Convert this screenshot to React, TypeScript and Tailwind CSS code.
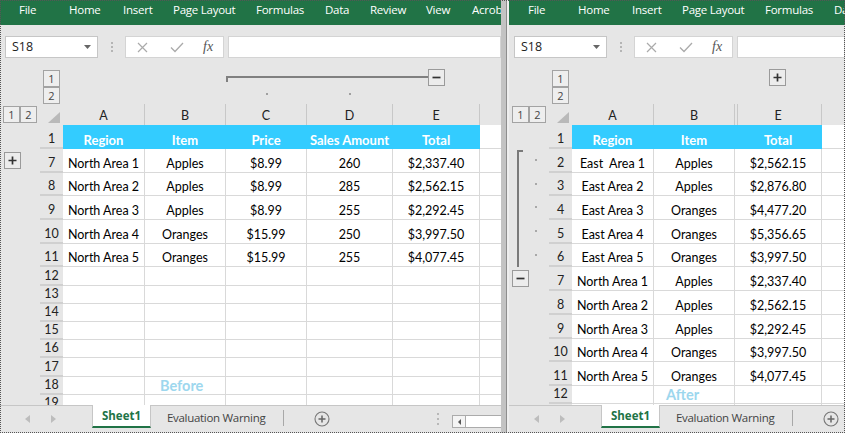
import React from 'react';

type Outline = 'start' | 'mid' | 'minus' | 'plus';
type Col = { key: string; w: string; outline?: Outline; hiddenBefore?: boolean };
type Side = 'plus' | 'minus' | 'top' | 'line';
type Row = {
  n: number;
  h: string;
  cells?: string[];
  head?: boolean;
  side?: Side;
  note?: { text: string; col: number; pad: string };
};

const UI = "font-['Open_Sans','Noto_Sans',sans-serif]";
const CELL = "font-['Lato','Carlito',sans-serif]";
const TALL = 'h-[23.7px]';
const SHORT = 'h-[18.2px]';

const RIBBON: [string, string][] = [
  ['File', 'w-[50px]'],
  ['Home', 'w-[54px]'],
  ['Insert', 'w-[50px]'],
  ['Page Layout', 'w-[83px]'],
  ['Formulas', 'w-[69px]'],
  ['Data', 'w-[45px]'],
  ['Review', 'w-[56px]'],
  ['View', 'w-[46px]'],
  ['Acrobat', 'w-[60px]'],
];

const LEFT_COLS: Col[] = [
  { key: 'A', w: 'w-[82px]' },
  { key: 'B', w: 'w-[81px]' },
  { key: 'C', w: 'w-[81px]', outline: 'start' },
  { key: 'D', w: 'w-[86px]', outline: 'mid' },
  { key: 'E', w: 'w-[87px]', outline: 'minus' },
];

const RIGHT_COLS: Col[] = [
  { key: 'A', w: 'w-[82px]' },
  { key: 'B', w: 'w-[81px]' },
  { key: 'E', w: 'w-[87px]', outline: 'plus', hiddenBefore: true },
];

const LEFT_ROWS: Row[] = [
  { n: 1, h: 'h-[24px]', head: true, cells: ['Region', 'Item', 'Price', 'Sales Amount', 'Total'] },
  { n: 7, h: TALL, side: 'plus', cells: ['North Area 1', 'Apples', '$8.99', '260', '$2,337.40'] },
  { n: 8, h: TALL, cells: ['North Area 2', 'Apples', '$8.99', '285', '$2,562.15'] },
  { n: 9, h: TALL, cells: ['North Area 3', 'Apples', '$8.99', '255', '$2,292.45'] },
  { n: 10, h: TALL, cells: ['North Area 4', 'Oranges', '$15.99', '250', '$3,997.50'] },
  { n: 11, h: TALL, cells: ['North Area 5', 'Oranges', '$15.99', '255', '$4,077.45'] },
  { n: 12, h: SHORT },
  { n: 13, h: SHORT },
  { n: 14, h: SHORT },
  { n: 15, h: SHORT },
  { n: 16, h: SHORT },
  { n: 17, h: SHORT },
  { n: 18, h: SHORT, note: { text: 'Before', col: 1, pad: 'pl-[15px]' } },
  { n: 19, h: SHORT },
];

const RIGHT_ROWS: Row[] = [
  { n: 1, h: 'h-[24px]', head: true, cells: ['Region', 'Item', 'Total'] },
  { n: 2, h: TALL, side: 'top', cells: ['East  Area 1', 'Apples', '$2,562.15'] },
  { n: 3, h: TALL, side: 'line', cells: ['East Area 2', 'Apples', '$2,876.80'] },
  { n: 4, h: TALL, side: 'line', cells: ['East Area 3', 'Oranges', '$4,477.20'] },
  { n: 5, h: TALL, side: 'line', cells: ['East Area 4', 'Oranges', '$5,356.65'] },
  { n: 6, h: TALL, side: 'line', cells: ['East Area 5', 'Oranges', '$3,997.50'] },
  { n: 7, h: TALL, side: 'minus', cells: ['North Area 1', 'Apples', '$2,337.40'] },
  { n: 8, h: TALL, cells: ['North Area 2', 'Apples', '$2,562.15'] },
  { n: 9, h: TALL, cells: ['North Area 3', 'Apples', '$2,292.45'] },
  { n: 10, h: TALL, cells: ['North Area 4', 'Oranges', '$3,997.50'] },
  { n: 11, h: TALL, cells: ['North Area 5', 'Oranges', '$4,077.45'] },
  { n: 12, h: SHORT, note: { text: 'After', col: 1, pad: 'pl-[12px]' } },
  { n: 13, h: SHORT },
];

function LevelBox({ children }: { children: React.ReactNode }) {
  return (
    <div className={`flex h-[17px] w-[17px] flex-none items-center justify-center border border-[#a3a3a3] bg-[#eeeeee] text-[11px] leading-none text-[#444] ${UI}`}>
      {children}
    </div>
  );
}

function OutlineBtn({ plus }: { plus?: boolean }) {
  return (
    <div className="flex h-[17px] w-[17px] flex-none items-center justify-center border border-[#9a9a9a] bg-[#ececec]">
      <svg width="9" height="9" viewBox="0 0 9 9">
        <path d={plus ? 'M0.5 4.5h8M4.5 0.5v8' : 'M0.5 4.5h8'} stroke="#333" strokeWidth="1.7" />
      </svg>
    </div>
  );
}

function ColOutline({ kind }: { kind?: Outline }) {
  if (kind === 'start')
    return (
      <div className="flex flex-col">
        <div className="mt-[14px] h-[6px] border-l-2 border-t-2 border-[#808080]" />
        <div className="mx-auto mt-[11px] h-[2px] w-[2px] bg-[#a0a0a0]" />
      </div>
    );
  if (kind === 'mid')
    return (
      <div className="flex flex-col">
        <div className="mt-[14px] h-[2px] bg-[#808080]" />
        <div className="mx-auto mt-[15px] h-[2px] w-[2px] bg-[#a0a0a0]" />
      </div>
    );
  if (kind === 'minus')
    return (
      <div className="flex items-start">
        <div className="mt-[14px] h-[2px] w-[35px] bg-[#808080]" />
        <div className="mt-[7px]">
          <OutlineBtn />
        </div>
      </div>
    );
  if (kind === 'plus')
    return (
      <div className="ml-[34px] mt-[7px]">
        <OutlineBtn plus />
      </div>
    );
  return null;
}

function RowSide({ kind }: { kind?: Side }) {
  if (kind === 'plus')
    return (
      <div className="ml-[4px] mt-[3px]">
        <OutlineBtn plus />
      </div>
    );
  if (kind === 'minus')
    return (
      <div className="ml-[3px] mt-[2.5px]">
        <OutlineBtn />
      </div>
    );
  if (kind === 'top' || kind === 'line')
    return (
      <>
        <div
          className={`ml-[8px] w-[6px] flex-none self-stretch border-l-2 border-[#7a7a7a] ${kind === 'top' ? 'mt-[1px] border-t-2' : ''}`}
        />
        <div className="ml-[12px] mt-[10px] h-[2px] w-[2px] flex-none bg-[#a8a8a8]" />
      </>
    );
  return null;
}

function FormulaBar() {
  return (
    <div className="flex h-[37px] flex-none items-start pt-[11px]">
      <div className={`ml-[5px] flex h-[22px] w-[93px] flex-none items-center justify-between border border-[#c6c6c6] bg-white pl-[6px] pr-[6px] text-[12.5px] text-[#222] ${UI}`}>
        <span>S18</span>
        <svg width="7" height="4" viewBox="0 0 7 4">
          <polygon points="0,0 7,0 3.5,4" fill="#666" />
        </svg>
      </div>
      <div className="ml-[13px] mt-[6px] flex flex-none flex-col gap-[2px]">
        <div className="h-[2px] w-[2px] bg-[#b5b5b5]" />
        <div className="h-[2px] w-[2px] bg-[#b5b5b5]" />
        <div className="h-[2px] w-[2px] bg-[#b5b5b5]" />
      </div>
      <div className="ml-[12px] flex h-[22px] w-[99px] flex-none items-center border border-[#d4d4d4] bg-white pl-[11px]">
        <svg width="11" height="11" viewBox="0 0 11 11">
          <path d="M1 1L10 10M10 1L1 10" stroke="#aaa" strokeWidth="1.2" />
        </svg>
        <svg className="ml-[22px]" width="14" height="11" viewBox="0 0 14 11">
          <path d="M1 5.5L5 9.5L13 1" stroke="#aaa" strokeWidth="1.3" fill="none" />
        </svg>
        <span className="ml-[19px] font-['Liberation_Serif',serif] text-[14px] italic leading-none text-[#555]">fx</span>
      </div>
      <div className="ml-[4px] h-[22px] min-w-0 flex-1 border border-[#d4d4d4] bg-white" />
    </div>
  );
}

function TabBar() {
  return (
    <div className={`flex h-[28px] flex-none whitespace-nowrap border-t border-[#c6c6c6] bg-[#e6e6e6] ${UI}`}>
      <div className="flex w-[92px] flex-none items-center gap-[21px] pb-[2px] pl-[25px]">
        <svg width="5" height="8" viewBox="0 0 5 8">
          <polygon points="5,0 5,8 0,4" fill="#bdbdbd" />
        </svg>
        <svg width="5" height="8" viewBox="0 0 5 8">
          <polygon points="0,0 0,8 5,4" fill="#bdbdbd" />
        </svg>
      </div>
      <div className="-mt-px flex h-[23px] w-[59px] flex-none items-center justify-center border-x border-b-2 border-x-[#c6c6c6] border-b-[#217346] bg-white text-[11.5px] font-bold text-[#217346]">
        Sheet1
      </div>
      <div className="flex w-[132px] flex-none items-center pb-[3px] pl-[16px] text-[11.5px] tracking-[-0.3px] text-[#444]">
        Evaluation Warning
      </div>
      <div className="mt-[4px] h-[16px] w-px flex-none bg-[#a8a8a8]" />
      <svg className="ml-[30px] mt-[5px] flex-none" width="16" height="16" viewBox="0 0 16 16">
        <circle cx="8" cy="8" r="7" stroke="#777" strokeWidth="1.1" fill="none" />
        <path d="M8 4.5v7M4.5 8h7" stroke="#666" strokeWidth="1.5" />
      </svg>
      <div className="ml-[107px] mt-[7px] flex flex-none flex-col gap-[3px]">
        <div className="h-[2px] w-[2px] bg-[#b8b8b8]" />
        <div className="h-[2px] w-[2px] bg-[#b8b8b8]" />
        <div className="h-[2px] w-[2px] bg-[#b8b8b8]" />
      </div>
      <div className="ml-[13px] mt-[9px] flex h-[13px] min-w-[60px] flex-1 border border-[#ababab] bg-white">
        <div className="flex w-[13px] flex-none items-center justify-center border-r border-[#ababab] bg-[#f4f4f4]">
          <svg width="3" height="6" viewBox="0 0 3 6">
            <polygon points="3,0 3,6 0,3" fill="#555" />
          </svg>
        </div>
      </div>
    </div>
  );
}

function Window({ cols, rows }: { cols: Col[]; rows: Row[] }) {
  return (
    <div className="flex h-full w-full min-w-0 flex-col overflow-hidden bg-[#e6e6e6]">
      <div className={`flex h-[25px] flex-none overflow-hidden whitespace-nowrap bg-[#217346] pl-[19px] pt-[2px] text-[11.5px] leading-[16px] tracking-[-0.25px] text-white ${UI}`}>
        {RIBBON.map(([label, w]) => (
          <span key={label} className={`${w} flex-none`}>
            {label}
          </span>
        ))}
      </div>

      <FormulaBar />

      {/* outline symbols above the column headers */}
      <div className="flex h-[42px] flex-none">
        <div className="w-[40px] flex-none" />
        <div className="flex w-[23px] flex-none flex-col justify-end pl-[3px]">
          <LevelBox>1</LevelBox>
          <LevelBox>2</LevelBox>
        </div>
        {cols.map((c) => (
          <div key={c.key} className={`${c.w} flex-none`}>
            <ColOutline kind={c.outline} />
          </div>
        ))}
      </div>

      {/* column headers */}
      <div className={`flex h-[21px] flex-none ${CELL}`}>
        <div className="flex w-[40px] flex-none items-center pl-[3px]">
          <LevelBox>1</LevelBox>
          <LevelBox>2</LevelBox>
        </div>
        <div className="flex w-[23px] flex-none items-end justify-end pb-[2px] pr-[3px]">
          <svg width="12" height="11" viewBox="0 0 12 11">
            <polygon points="12,0 12,11 0,11" fill="#b9b9b9" />
          </svg>
        </div>
        {cols.map((c) => (
          <div
            key={c.key}
            className={`${c.w} flex flex-none items-end justify-center border-r border-[#c8c8c8] pb-[1px] text-[12.5px] leading-[16px] text-[#222] ${
              c.hiddenBefore ? 'shadow-[inset_2px_0_0_#e6e6e6,inset_3px_0_0_#c8c8c8]' : ''
            }`}
          >
            {c.key}
          </div>
        ))}
        <div className="flex-1" />
      </div>

      {/* grid */}
      <div className={`flex min-h-0 flex-1 flex-col overflow-hidden ${CELL}`}>
        {rows.map((r) => (
          <div key={r.n} className={`flex flex-none ${r.h}`}>
            <div className="flex w-[40px] flex-none items-start">
              <RowSide kind={r.side} />
            </div>
            <div className="flex w-[23px] flex-none items-end justify-center border-b-2 border-[#d0d0d0] text-[12.5px] leading-[16px] text-[#222]">
              {r.n}
            </div>
            {cols.map((c, i) => {
              const note = r.note && r.note.col === i ? r.note : null;
              return (
                <div
                  key={c.key}
                  className={`${c.w} flex flex-none items-end whitespace-pre border-b border-r text-[12.5px] leading-[16px] ${
                    note ? `justify-start ${note.pad}` : 'justify-center'
                  } ${r.head ? 'border-[#33ccff] bg-[#33ccff] text-[13px] font-bold text-white' : 'border-[#d9d9d9] bg-white text-black'}`}
                >
                  {note ? <span className="text-[14.5px] font-bold text-[#9dd7ee]">{note.text}</span> : r.cells?.[i]}
                </div>
              );
            })}
            <div className="flex-1 border-b border-[#d9d9d9] bg-white" />
          </div>
        ))}
      </div>

      <TabBar />
    </div>
  );
}

export default function App() {
  return (
    <div className="relative flex h-[433px] w-[845px] overflow-hidden bg-[#e6e6e6]">
      <div className="h-full w-[501px] flex-none">
        <Window cols={LEFT_COLS} rows={LEFT_ROWS} />
      </div>
      <div className="h-full w-[5px] flex-none bg-[#c3c3c3]" />
      <div className="h-full w-px flex-none bg-[#8e8e8e]" />
      <div className="h-full min-w-0 flex-1 bg-[#eeeeee] pl-[2px]">
        <Window cols={RIGHT_COLS} rows={RIGHT_ROWS} />
      </div>
      <div className="pointer-events-none absolute inset-0 border border-dotted border-[#555]" />
    </div>
  );
}
